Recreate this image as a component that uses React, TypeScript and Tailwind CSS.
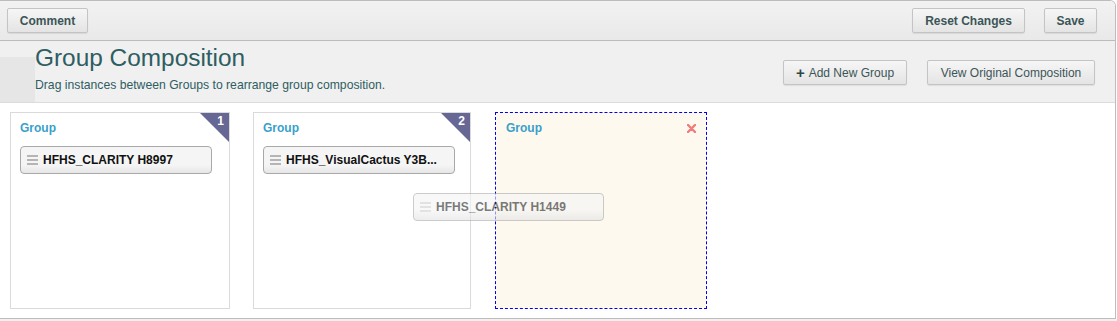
import React from "react";

const font = { fontFamily: '"Liberation Sans", Arial, sans-serif' };

function Btn({ children, className = "" }: { children: React.ReactNode; className?: string }) {
  return (
    <div
      className={
        "flex items-center justify-center h-[25px] border border-[#c4c4c4] rounded-[2px] bg-gradient-to-b from-[#f6f6f6] to-[#e4e4e4] text-[12px] text-[#3b5557] shadow-[0_1px_1px_rgba(0,0,0,0.08)] " +
        className
      }
    >
      {children}
    </div>
  );
}

function Grip({ light = false }: { light?: boolean }) {
  const c = light ? "bg-[#d0d0d0]" : "bg-[#b5b5b5]";
  return (
    <div className="flex flex-col gap-[2px] w-[11px] mr-[5px]">
      <div className={"h-[2px] " + c} />
      <div className={"h-[2px] " + c} />
      <div className={"h-[2px] " + c} />
    </div>
  );
}

function Item({ text }: { text: string }) {
  return (
    <div className="flex items-center h-[28px] w-[192px] px-[6px] border border-[#a9a9a9] rounded-[4px] bg-gradient-to-b from-[#f5f5f5] from-70% to-[#e6e6e6] text-[12px] font-bold text-[#111]">
      <Grip />
      <span className="whitespace-nowrap">{text}</span>
    </div>
  );
}

function Badge({ n }: { n: number }) {
  return (
    <div className="absolute top-0 right-0 w-[29px] h-[29px]">
      <svg width="29" height="29" className="absolute inset-0">
        <polygon points="0,0 29,0 29,29" fill="#676796" />
      </svg>
      <span className="absolute right-[5px] top-[1px] text-[12px] font-bold text-white leading-[14px]">{n}</span>
    </div>
  );
}

export default function App() {
  return (
    <div style={font} className="w-[1117px] h-[321px] bg-white">
      <div className="w-[1116px] h-[319px] border-t border-r border-b border-[#bdbdbd] rounded-tr-[6px] overflow-hidden flex flex-col">
        {/* toolbar */}
        <div className="h-[40px] flex items-center justify-between pl-[7px] pr-[18px] bg-gradient-to-b from-[#f2f2f2] to-[#e9e9e9] border-b border-[#bcbcbc] shrink-0">
          <Btn className="w-[81px] font-bold">Comment</Btn>
          <div className="flex gap-[19px]">
            <Btn className="w-[113px] font-bold">Reset Changes</Btn>
            <Btn className="w-[53px] font-bold">Save</Btn>
          </div>
        </div>
        {/* header */}
        <div className="h-[62px] flex bg-[#f0f0f0] border-b border-[#dcdcdc] shrink-0">
          <div className="w-[35px] flex flex-col shrink-0">
            <div className="h-[16px] bg-[#f0f0f0]" />
            <div className="flex-1 bg-[#e6e6e6]" />
          </div>
          <div className="flex-1 flex flex-col pt-[3px]">
            <div className="text-[24.4px] leading-[28px] text-[#2e5d62]">Group Composition</div>
            <div className="text-[12.2px] leading-[14px] mt-[6px] text-[#2e5d62]">
              Drag instances between Groups to rearrange group composition.
            </div>
          </div>
          <div className="flex items-start gap-[20px] pt-[19px] pr-[20px]">
            <Btn className="w-[124px]">
              <span className="font-bold text-[15px] mr-[4px] leading-[12px] text-[#2f4546]">+</span>Add New Group
            </Btn>
            <Btn className="w-[168px]">View Original Composition</Btn>
          </div>
        </div>
        {/* content */}
        <div className="relative flex-1 flex items-start pl-[10px] pt-[9px] bg-white">
          <div className="relative w-[220px] h-[197px] border border-[#dadada] bg-white pl-[9px] pt-[8px]">
            <Badge n={1} />
            <div className="text-[12px] font-bold text-[#3a9fcb] leading-[14px]">Group</div>
            <div className="mt-[11px]">
              <Item text="HFHS_CLARITY H8997" />
            </div>
          </div>
          <div className="relative ml-[23px] w-[218px] h-[197px] border border-[#dadada] bg-white pl-[9px] pt-[8px]">
            <Badge n={2} />
            <div className="text-[12px] font-bold text-[#3a9fcb] leading-[14px]">Group</div>
            <div className="mt-[11px]">
              <Item text="HFHS_VisualCactus Y3B..." />
            </div>
          </div>
          <div className="relative ml-[24px] w-[212px] h-[197px] border border-dashed border-[#0000ee] bg-[#fdf9ef] pl-[10px] pt-[8px] flex justify-between pr-[10px]">
            <div className="text-[12px] font-bold text-[#3a9fcb] leading-[14px]">Group</div>
            <svg width="9" height="9" viewBox="0 0 9 9" className="mt-[3px]">
              <path d="M1 1 L8 8 M8 1 L1 8" stroke="#f07c7c" strokeWidth="2.4" strokeLinecap="round" />
            </svg>
          </div>
          {/* dragging item */}
          <div className="absolute left-[413px] top-[90px] opacity-60 flex items-center h-[28px] w-[191px] px-[6px] border border-[#a9a9a9] rounded-[4px] bg-gradient-to-b from-[#f5f5f5] from-60% to-[#e2e2e2] text-[12px] font-bold text-[#222]">
            <Grip light />
            <span className="whitespace-nowrap">HFHS_CLARITY H1449</span>
          </div>
        </div>
      </div>
      <div className="h-[2px] bg-[#f0f0f0]" />
    </div>
  );
}
